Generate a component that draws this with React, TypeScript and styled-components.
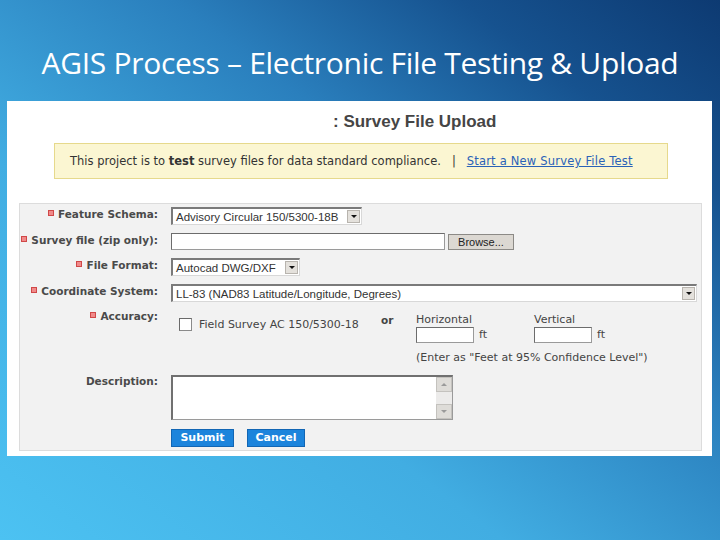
import React from "react";
import styled, { createGlobalStyle } from "styled-components";

const Global = createGlobalStyle`
  html, body { margin: 0; padding: 0; }
  body { width: 720px; height: 540px; overflow: hidden; }
`;

const Page = styled.div`
  width: 720px;
  height: 540px;
  background: linear-gradient(to top right, #4cc2f2 0%, #41ade2 35%, #2a7fbd 62%, #16528f 82%, #0d3a72 100%);
  display: flex;
  flex-direction: column;
  font-family: "DejaVu Sans", Verdana, sans-serif;
`;

const Title = styled.h1`
  margin: 0;
  height: 101px;
  box-sizing: border-box;
  padding-top: 43px;
  text-align: center;
  color: #ffffff;
  font-family: "Open Sans", "Noto Sans", sans-serif;
  font-weight: 400;
  font-size: 30px;
  line-height: 40px;
  letter-spacing: -0.3px;
  white-space: nowrap;
`;

const Panel = styled.div`
  margin: 0 8px 0 7px;
  background: #ffffff;
  padding: 12px 10px 5px 12px;
`;

const Heading = styled.div`
  padding-left: 314px;
  height: 18px;
  line-height: 18px;
  font-family: "Liberation Sans", Arial, sans-serif;
  font-weight: 700;
  font-size: 17px;
  color: #454545;
`;

const Notice = styled.div`
  margin: 12px 0 0 35px;
  width: 614px;
  height: 36px;
  box-sizing: border-box;
  background: #fbf6d2;
  border: 1px solid #e6d98c;
  padding-left: 15px;
  display: flex;
  align-items: center;
  font-size: 11.5px;
  color: #333333;
  white-space: pre;
`;

const Link = styled.a`
  color: #2a62b8;
  text-decoration: underline;
  letter-spacing: 0.2px;
`;

const FormBox = styled.div`
  margin-top: 24px;
  border: 1px solid #dcdcdc;
  background: #f2f2f2;
  padding: 3px 0 3px 0;
  display: grid;
  grid-template-columns: 140px 1fr;
  grid-template-rows: 18px 17px 18px 17px auto auto 18px;
  column-gap: 11px;
  row-gap: 8px;
  height: 248px;
  box-sizing: border-box;
`;

const Label = styled.div<{ $required?: boolean }>`
  text-align: right;
  padding-right: 2px;
  font-size: 10.5px;
  font-weight: 700;
  line-height: 15px;
  color: #4a4a4a;
  white-space: nowrap;
  &::before {
    content: "";
    display: ${(p) => (p.$required ? "inline-block" : "none")};
    width: 4px;
    height: 4px;
    background: #f08a8a;
    border: 0.5px solid #d04848;
    margin-right: 4px;
    vertical-align: 2px;
  }
`;

const Field = styled.div`
  display: flex;
  align-items: flex-start;
  gap: 3px;
`;

const SelectBox = styled.div<{ $w: number }>`
  width: ${(p) => p.$w}px;
  height: 18px;
  box-sizing: border-box;
  background: #fff;
  border-top: 2px solid #7a7a7a;
  border-left: 2px solid #7a7a7a;
  border-right: 1px solid #d8d8d8;
  border-bottom: 1px solid #d8d8d8;
  display: flex;
  align-items: center;
  justify-content: space-between;
  font-family: "Liberation Sans", Arial, sans-serif;
  font-size: 11.5px;
  color: #333;
  padding-left: 3px;
  white-space: nowrap;
`;

const Arrow = styled.span`
  width: 13px;
  height: 13px;
  flex: none;
  margin-right: 1px;
  box-sizing: border-box;
  background: #e4e1dc;
  border: 1px solid #b8b4ae;
  display: flex;
  align-items: center;
  justify-content: center;
  &::after {
    content: "";
    border-left: 3px solid transparent;
    border-right: 3px solid transparent;
    border-top: 3px solid #111;
  }
`;

const TextInput = styled.div<{ $w: number; $h?: number }>`
  width: ${(p) => p.$w}px;
  height: ${(p) => p.$h ?? 17}px;
  box-sizing: border-box;
  background: #fff;
  border: 1px solid #9a9a9a;
  border-top-color: #6c6c6c;
  border-left-color: #6c6c6c;
`;

const BrowseButton = styled.div`
  width: 66px;
  height: 16px;
  margin-top: 1px;
  box-sizing: border-box;
  background: #dcd8d2;
  border: 1px solid #8c8a86;
  font-family: "Liberation Sans", Arial, sans-serif;
  font-size: 11px;
  line-height: 14px;
  text-align: center;
  color: #222;
`;

const Accuracy = styled.div`
  display: flex;
  flex-direction: column;
`;

const AccTop = styled.div`
  display: flex;
  align-items: flex-start;
`;

const CheckOption = styled.div`
  width: 202px;
  box-sizing: border-box;
  padding: 9px 0 0 8px;
  display: flex;
  align-items: center;
  gap: 7px;
  font-size: 11px;
  color: #444;
  line-height: 13px;
  white-space: nowrap;
`;

const CheckBox = styled.span`
  width: 13px;
  height: 13px;
  flex: none;
  box-sizing: border-box;
  background: #fff;
  border: 1px solid #8a8a8a;
  border-top-color: #6a6a6a;
  border-left-color: #6a6a6a;
`;

const Or = styled.div`
  width: 43px;
  box-sizing: border-box;
  padding: 4px 0 0 8px;
  font-size: 10.5px;
  font-weight: 700;
  color: #444;
  line-height: 14px;
`;

const Measure = styled.div`
  width: 118px;
  display: flex;
  flex-direction: column;
  padding-top: 4px;
  font-size: 11px;
  color: #444;
  line-height: 14px;
`;

const MeasureRow = styled.div`
  display: flex;
  align-items: center;
  gap: 5px;
`;

const Hint = styled.div`
  margin: 8px 0 0 245px;
  font-size: 11px;
  color: #444;
  line-height: 14px;
  white-space: nowrap;
`;

const TextArea = styled.div`
  margin-top: 1px;
  width: 282px;
  height: 45px;
  box-sizing: border-box;
  background: #fff;
  border: 1px solid #9a9a9a;
  border-top: 2px solid #707070;
  border-left: 2px solid #707070;
  display: flex;
  justify-content: flex-end;
`;

const ScrollBar = styled.div`
  width: 16px;
  background: #ecebea;
  display: flex;
  flex-direction: column;
  justify-content: space-between;
`;

const ScrollArrow = styled.span<{ $up?: boolean }>`
  height: 15px;
  box-sizing: border-box;
  background: #dedcd8;
  border: 1px solid #c4c2be;
  display: flex;
  align-items: center;
  justify-content: center;
  &::after {
    content: "";
    border-left: 3px solid transparent;
    border-right: 3px solid transparent;
    ${(p) => (p.$up ? "border-bottom: 3px solid #9a9a9a;" : "border-top: 3px solid #9a9a9a;")}
  }
`;

const Buttons = styled.div`
  display: flex;
  gap: 13px;
`;

const BlueButton = styled.div<{ $w: number }>`
  width: ${(p) => p.$w}px;
  height: 18px;
  box-sizing: border-box;
  background: #1c84dc;
  border: 1px solid #1266b4;
  color: #fff;
  font-size: 11px;
  font-weight: 700;
  line-height: 16px;
  text-align: center;
`;

export default function App() {
  return (
    <>
      <Global />
      <Page>
        <Title>AGIS Process – Electronic File Testing &amp; Upload</Title>
        <Panel>
          <Heading>: Survey File Upload</Heading>
          <Notice>
            This project is to <b>test</b> survey files for data standard compliance.{"   |   "}
            <Link>Start a New Survey File Test</Link>
          </Notice>
          <FormBox>
            <Label $required>Feature Schema:</Label>
            <Field>
              <SelectBox $w={191}>
                Advisory Circular 150/5300-18B
                <Arrow />
              </SelectBox>
            </Field>

            <Label $required>Survey file (zip only):</Label>
            <Field>
              <TextInput $w={274} />
              <BrowseButton>Browse...</BrowseButton>
            </Field>

            <Label $required>File Format:</Label>
            <Field>
              <SelectBox $w={129}>
                Autocad DWG/DXF
                <Arrow />
              </SelectBox>
            </Field>

            <Label $required>Coordinate System:</Label>
            <Field>
              <SelectBox $w={526}>
                LL-83 (NAD83 Latitude/Longitude, Degrees)
                <Arrow />
              </SelectBox>
            </Field>

            <Label $required>Accuracy:</Label>
            <Accuracy>
              <AccTop>
                <CheckOption>
                  <CheckBox />
                  Field Survey AC 150/5300-18
                </CheckOption>
                <Or>or</Or>
                <Measure>
                  Horizontal
                  <MeasureRow>
                    <TextInput $w={58} $h={16} />
                    ft
                  </MeasureRow>
                </Measure>
                <Measure>
                  Vertical
                  <MeasureRow>
                    <TextInput $w={58} $h={16} />
                    ft
                  </MeasureRow>
                </Measure>
              </AccTop>
              <Hint>(Enter as "Feet at 95% Confidence Level")</Hint>
            </Accuracy>

            <Label>Description:</Label>
            <Field>
              <TextArea>
                <ScrollBar>
                  <ScrollArrow $up />
                  <ScrollArrow />
                </ScrollBar>
              </TextArea>
            </Field>

            <div />
            <Buttons>
              <BlueButton $w={63}>Submit</BlueButton>
              <BlueButton $w={58}>Cancel</BlueButton>
            </Buttons>
          </FormBox>
        </Panel>
      </Page>
    </>
  );
}
